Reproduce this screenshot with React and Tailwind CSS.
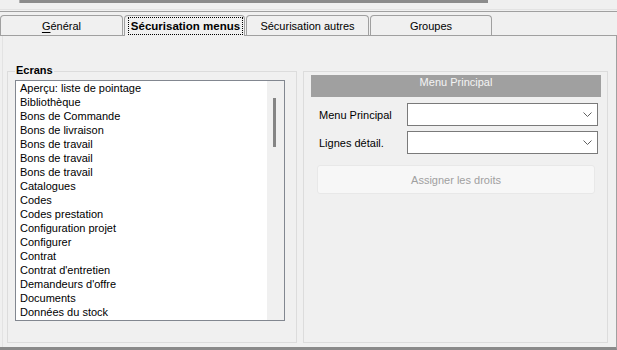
import React from "react";

const items = [
  "Aperçu: liste de pointage",
  "Bibliothèque",
  "Bons de Commande",
  "Bons de livraison",
  "Bons de travail",
  "Bons de travail",
  "Bons de travail",
  "Catalogues",
  "Codes",
  "Codes prestation",
  "Configuration projet",
  "Configurer",
  "Contrat",
  "Contrat d'entretien",
  "Demandeurs d'offre",
  "Documents",
  "Données du stock",
];

function Chevron() {
  return (
    <svg width="9" height="5" viewBox="0 0 9 5" fill="none">
      <path d="M0.5 0.5 L4.5 4.5 L8.5 0.5" stroke="#606060" strokeWidth="1" />
    </svg>
  );
}

function Combo() {
  return (
    <div className="w-[191px] h-[23px] border border-[#7a7a7a] bg-white flex items-center justify-end pr-[5px]">
      <Chevron />
    </div>
  );
}

function Tab({ w, children }) {
  return (
    <div
      className={`${w} h-[20px] border border-b-0 border-[#a0a0a0] rounded-t-[4px] bg-[#f0f0f0] flex items-center justify-center whitespace-nowrap`}
    >
      {children}
    </div>
  );
}

export default function App() {
  return (
    <div className="w-[617px] h-[350px] bg-[#f0f0f0] flex flex-col overflow-hidden font-['Liberation_Sans',Arial,sans-serif] text-[11px] leading-[14px] text-black">
      {/* top strip */}
      <div className="h-[15px] flex flex-col shrink-0">
        <div className="ml-[19px] w-[469px] h-[3px] bg-[#8c8c8c] border-l border-[#b0b0b0]" />
        <div className="mt-[6px] h-px bg-[#e3e3e3]" />
        <div className="mt-px h-px bg-[#a0a0a0]" />
      </div>

      {/* tabs */}
      <div className="h-[21px] shrink-0 flex items-start gap-px border-b border-[#a0a0a0]">
        <Tab w="w-[123px]">
          <span>
            <span className="underline underline-offset-2">G</span>énéral
          </span>
        </Tab>
        <div className="relative z-10 w-[121px] h-[21px] border border-b-0 border-[#a0a0a0] rounded-t-[4px] bg-[#f0f0f0]">
          <div className="ml-[3px] mt-px w-[115px] h-[18px] border border-dotted border-black flex items-center justify-center font-bold text-[11.5px] whitespace-nowrap">
            Sécurisation menus
          </div>
        </div>
        <Tab w="w-[123px]">Sécurisation autres</Tab>
        <Tab w="w-[122px]">Groupes</Tab>
      </div>

      {/* panel */}
      <div className="flex-1 flex border-r border-r-[#a0a0a0] border-b-[3px] border-b-[#8a8a8a]">
        <div className="ml-[2px] border-l border-[#e3e3e3] flex-1 flex items-start pt-[35px] pl-[4px] gap-[6px]">
          {/* Ecrans group */}
          <div className="relative w-[290px] h-[272px] border border-[#dcdcdc]">
            <span className="absolute left-[7px] top-[-9px] px-px bg-[#f0f0f0] font-bold">
              Ecrans
            </span>
            <div className="ml-[7px] mt-[8px] w-[270px] h-[241px] border border-[#828790] bg-white flex">
              <div className="flex-1 pl-[4px] flex flex-col overflow-hidden">
                {items.map((t, i) => (
                  <div key={i} className="h-[14px] leading-[14px] whitespace-nowrap">
                    {t}
                  </div>
                ))}
              </div>
              <div className="w-[17px] bg-[#f0f0f0] pl-[6px] pt-[17px]">
                <div className="w-[3px] h-[49px] bg-[#858585]" />
              </div>
            </div>
          </div>

          {/* Menu group */}
          <div className="w-[305px] h-[272px] border border-[#dcdcdc] flex flex-col">
            <div className="ml-[7px] mt-[3px] w-[290px] h-[22px] bg-[#a0a0a0] text-[#f4f4f4] text-center leading-[14px]">
              Menu Principal
            </div>
            <div className="mt-[6px] ml-[15px] h-[23px] flex items-center">
              <span className="w-[88px]">Menu Principal</span>
              <Combo />
            </div>
            <div className="mt-[5px] ml-[15px] h-[23px] flex items-center">
              <span className="w-[88px]">Lignes détail.</span>
              <Combo />
            </div>
            <div className="mt-[11px] ml-[13px] w-[278px] h-[29px] rounded-[3px] bg-[#f7f7f7] border border-[#e8e8e8] flex items-center justify-center text-[#a0a0a0]">
              Assigner les droits
            </div>
          </div>
        </div>
      </div>
    </div>
  );
}
